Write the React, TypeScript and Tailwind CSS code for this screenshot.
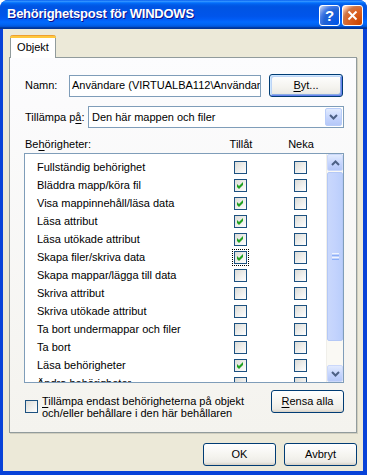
import React from "react";

const rows: [string, boolean, boolean?][] = [
  ["Fullständig behörighet", false],
  ["Bläddra mapp/köra fil", true],
  ["Visa mappinnehåll/läsa data", true],
  ["Läsa attribut", true],
  ["Läsa utökade attribut", true],
  ["Skapa filer/skriva data", true, true],
  ["Skapa mappar/lägga till data", false],
  ["Skriva attribut", false],
  ["Skriva utökade attribut", false],
  ["Ta bort undermappar och filer", false],
  ["Ta bort", false],
  ["Läsa behörigheter", true],
  ["Ändra behörigheter", false],
];

function U({ children }: { children: React.ReactNode }) {
  return <span className="underline decoration-1 underline-offset-[2px]">{children}</span>;
}

function Check({ checked, focus }: { checked?: boolean; focus?: boolean }) {
  return (
    <span
      className={
        "relative block w-[13px] h-[13px] shrink-0 border border-[#1C5180] bg-[linear-gradient(135deg,#DCDCD7,#FFFFFF)]" +
        (focus ? " outline outline-1 outline-dotted outline-black outline-offset-[1px]" : "")
      }
    >
      {checked && (
        <svg width="11" height="11" viewBox="0 0 11 11" className="absolute left-0 top-0">
          <polygon points="2,4 4,6 8,2 8,5 4,9 2,7" fill="#21A121" />
        </svg>
      )}
    </span>
  );
}

function Chevron({ up }: { up?: boolean }) {
  return (
    <svg width="9" height="6" viewBox="0 0 9 6">
      {up ? (
        <polyline points="1,5 4.5,1.5 8,5" fill="none" stroke="#4D6185" strokeWidth="2" />
      ) : (
        <polyline points="1,1 4.5,4.5 8,1" fill="none" stroke="#4D6185" strokeWidth="2" />
      )}
    </svg>
  );
}

function XpButton({ children, w, focus }: { children: React.ReactNode; w: string; focus?: boolean }) {
  return (
    <div
      className={
        w +
        " h-[23px] shrink-0 flex items-center justify-center rounded-[3px] border border-[#003C74] bg-[linear-gradient(180deg,#FFFFFF,#F4F3EE_60%,#ECEBE6_86%,#D6D0C5)]" +
        (focus
          ? " shadow-[inset_1px_1px_0_#CEE7FF,inset_-1px_-1px_0_#6982EE,inset_2px_2px_0_#BCD4F6,inset_-2px_-2px_0_#89ADE4]"
          : "")
      }
    >
      {children}
    </div>
  );
}

export default function App() {
  return (
    <div className="w-[367px] h-[475px] bg-white font-['Liberation_Sans',Arial,sans-serif] text-[11px] text-black">
      <div className="flex flex-col w-full h-full rounded-t-[8px] overflow-hidden bg-[#0842D8]">
        {/* Title bar */}
        <div className="h-[29px] shrink-0 flex items-center pl-[7px] pr-[4px] bg-[linear-gradient(180deg,#0058EE_0%,#3593FF_4%,#288EFF_6%,#127DFF_8%,#036FFC_10%,#0262EE_14%,#0057E5_20%,#0054E3_24%,#0055EB_56%,#005BF5_66%,#026AFE_76%,#0062EF_86%,#0052D6_92%,#0040AB_94%,#003092_100%)]">
          <span className="text-white font-bold text-[13px] tracking-[-0.25px] [text-shadow:1px_1px_#0F1089] pb-px">
            Behörighetspost för WINDOWS
          </span>
          <div className="ml-auto flex gap-[2px] pt-[1px]">
            <div className="w-[21px] h-[21px] rounded-[3px] border border-white bg-[radial-gradient(circle_at_90%_90%,#0054E9_0%,#2263D5_55%,#4479E4_70%,#A3BBEC_90%,#FFFFFF_100%)] flex items-center justify-center">
              <span className="text-white font-bold text-[15px] leading-none">?</span>
            </div>
            <div className="w-[21px] h-[21px] rounded-[3px] border border-white bg-[radial-gradient(circle_at_90%_90%,#CC4600_0%,#DC6527_55%,#CD7546_70%,#FFCCB2_90%,#FFFFFF_100%)] flex items-center justify-center">
              <svg width="11" height="11" viewBox="0 0 11 11">
                <line x1="1.5" y1="1.5" x2="9.5" y2="9.5" stroke="white" strokeWidth="2" />
                <line x1="9.5" y1="1.5" x2="1.5" y2="9.5" stroke="white" strokeWidth="2" />
              </svg>
            </div>
          </div>
        </div>

        {/* Client area */}
        <div className="flex-1 ml-[3px] mr-[4px] mb-[4px] bg-[#ECE9D8] flex flex-col px-[6px] pt-[6px]">
          {/* Tab */}
          <div className="relative z-10 -mb-px ml-px w-[46px] h-[23px] bg-white border-x border-[#919B9C] rounded-t-[3px] flex flex-col">
            <div className="-mx-px h-[3px] rounded-t-[3px] bg-[linear-gradient(180deg,#E68B2C,#FFC73C_50%,#FFC73C)]" />
            <div className="flex-1 flex items-center justify-center pb-[1px]">Objekt</div>
          </div>

          {/* Panel */}
          <div className="w-[348px] h-[376px] shrink-0 border border-[#919B9C] bg-[linear-gradient(180deg,#FCFCFE,#F4F3EE)] shadow-[1px_1px_0_#D0CEBF] pl-[14px] pr-[12px] pt-[16px] flex flex-col">
            {/* Namn */}
            <div className="flex items-center h-[23px]">
              <span className="w-[45px] pl-px">Namn:</span>
              <div className="w-[192px] h-[22px] border border-[#7F9DB9] bg-white flex items-center pl-[2px] overflow-hidden whitespace-nowrap">
                Användare (VIRTUALBA112\Användare)
              </div>
              <div className="ml-[8px]">
                <XpButton w="w-[74px]" focus>
                  <span>
                    <U>B</U>yt...
                  </span>
                </XpButton>
              </div>
            </div>

            {/* Tillämpa på */}
            <div className="flex items-center h-[22px] mt-[9px]">
              <span className="w-[64px] pl-px">
                Tillämpa p<U>å</U>:
              </span>
              <div className="w-[256px] h-[22px] border border-[#7F9DB9] bg-white flex items-center pl-[3px]">
                <span className="flex-1 whitespace-nowrap">Den här mappen och filer</span>
                <div className="w-[17px] h-[18px] mr-px rounded-[2px] border border-[#B9CDF9] bg-[linear-gradient(180deg,#E2EBFE,#C3D3FD_60%,#B5C8F8)] flex items-center justify-center">
                  <Chevron />
                </div>
              </div>
            </div>

            {/* Header */}
            <div className="flex items-center h-[14px] mt-[9px] mb-[2px]">
              <span className="w-[197px] pl-px">
                Be<U>h</U>örigheter:
              </span>
              <span className="w-[40px] text-center">Tillåt</span>
              <span className="w-[20px]" />
              <span className="w-[40px] text-center">Neka</span>
            </div>

            {/* List */}
            <div className="flex h-[230px] shrink-0 border border-[#7F9DB9] bg-white">
              <div className="flex-1 overflow-hidden pt-[4px]">
                {rows.map(([name, allowed, focus]) => (
                  <div key={name} className="flex items-center h-[18px]">
                    <span className="w-[209px] pl-[12px] whitespace-nowrap">{name}</span>
                    <Check checked={allowed} focus={focus} />
                    <span className="w-[47px] shrink-0" />
                    <Check />
                  </div>
                ))}
              </div>
              <div className="w-[17px] shrink-0 flex flex-col bg-[#FAF9F4] border-l border-[#F0EFEA]">
                <div className="h-[17px] shrink-0 rounded-[2px] border border-[#CBD8FA] bg-[linear-gradient(180deg,#E2EBFE,#C3D3FD_60%,#B5C8F8)] flex items-center justify-center">
                  <Chevron up />
                </div>
                <div className="mt-px h-[169px] shrink-0 rounded-[2px] border border-[#B4C8F6] bg-[linear-gradient(90deg,#C9D8FC,#C3D3FD_50%,#BACEFB)] flex items-center justify-center">
                  <div className="flex flex-col gap-[1px]">
                    <div className="w-[7px] h-px bg-[#EEF4FE]" />
                    <div className="w-[7px] h-px bg-[#8CB0F8]" />
                    <div className="w-[7px] h-px bg-[#EEF4FE]" />
                    <div className="w-[7px] h-px bg-[#8CB0F8]" />
                  </div>
                </div>
                <div className="flex-1" />
                <div className="h-[17px] shrink-0 rounded-[2px] border border-[#CBD8FA] bg-[linear-gradient(180deg,#E2EBFE,#C3D3FD_60%,#B5C8F8)] flex items-center justify-center">
                  <Chevron />
                </div>
              </div>
            </div>

            {/* Bottom options */}
            <div className="flex items-start mt-[7px]">
              <div className="flex items-start">
                <div className="mt-[10px] pl-px">
                  <Check />
                </div>
                <div className="ml-[4px] mt-[5px] leading-[12px]">
                  <div>
                    <U>T</U>illämpa endast behörigheterna på objekt
                  </div>
                  <div>och/eller behållare i den här behållaren</div>
                </div>
              </div>
              <div className="ml-auto">
                <XpButton w="w-[73px]">
                  <span>
                    <U>R</U>ensa alla
                  </span>
                </XpButton>
              </div>
            </div>
          </div>

          {/* Dialog buttons */}
          <div className="flex justify-end gap-[8px] mt-[10px]">
            <XpButton w="w-[73px]">OK</XpButton>
            <XpButton w="w-[73px]">Avbryt</XpButton>
          </div>
        </div>
      </div>
    </div>
  );
}
